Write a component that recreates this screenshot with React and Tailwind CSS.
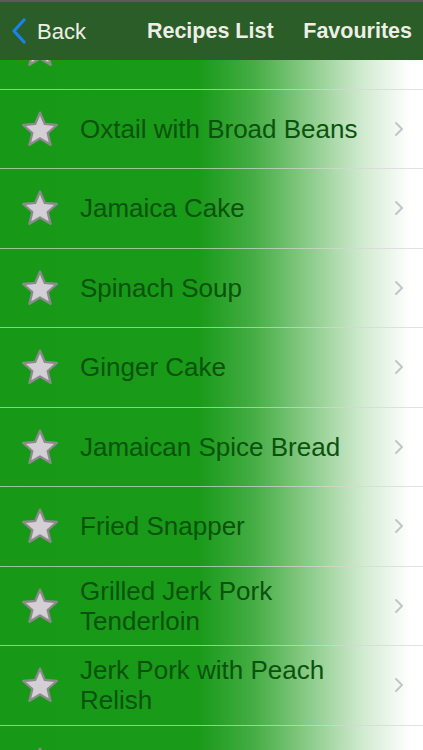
import React from 'react';

const recipes = [
  '',
  'Oxtail with Broad Beans',
  'Jamaica Cake',
  'Spinach Soup',
  'Ginger Cake',
  'Jamaican Spice Bread',
  'Fried Snapper',
  'Grilled Jerk Pork Tenderloin',
  'Jerk Pork with Peach Relish',
  '',
];

const Star = () => (
  <svg width="40" height="38" viewBox="0 0 38 36" className="shrink-0">
    <path
      d="M19 2.5 L23.6 13.2 L35 14.2 L26.3 21.8 L29 33 L19 27 L9 33 L11.7 21.8 L3 14.2 L14.4 13.2 Z"
      fill="#d3cfd4"
      stroke="#8c8a8c"
      strokeWidth="2.2"
      strokeLinejoin="round"
    />
  </svg>
);

const Chevron = () => (
  <svg width="10" height="16" viewBox="0 0 10 16" className="shrink-0">
    <path d="M2 2 L8 8 L2 14" fill="none" stroke="#c4c4c8" strokeWidth="2" strokeLinecap="round" strokeLinejoin="round" />
  </svg>
);

const Row = ({ title }) => (
  <div className="h-[79.5px] flex items-center pl-[20px] pr-[19px] border-b border-[#d6d6d6]/70">
    <Star />
    <span className="flex-1 pl-[20px] pr-[14px] text-[26px] leading-[30px] text-[#0a530c]">{title}</span>
    <Chevron />
  </div>
);

export default function App() {
  return (
    <div
      className="w-[423px] h-[750px] overflow-hidden flex flex-col bg-[linear-gradient(to_right,#179917_0%,#199a19_47%,#45ad44_60%,#86c984_72%,#d2ebd1_86%,#ffffff_97%)]"
      style={{ fontFamily: '"Liberation Sans", Arial, sans-serif' }}
    >
      <div className="h-[60px] shrink-0 bg-[#2a5d27] border-t-2 border-[#5b5b5b] flex items-center pl-[11px] pr-[11px] text-[#eeeee6] relative z-10">
        <div className="flex items-center gap-[10px]">
          <svg width="16" height="26" viewBox="0 0 16 26">
            <path d="M13 2 L3 13 L13 24" fill="none" stroke="#1a82ea" strokeWidth="3.2" strokeLinecap="round" strokeLinejoin="round" />
          </svg>
          <span className="text-[22px]">Back</span>
        </div>
        <span className="ml-[61px] font-bold text-[21.5px]">Recipes List</span>
        <span className="ml-auto font-bold text-[21.5px]">Favourites</span>
      </div>
      <div className="flex-1 overflow-hidden">
        <div className="-mt-[50px]">
          {recipes.map((r, i) => (
            <Row key={i} title={r} />
          ))}
        </div>
      </div>
    </div>
  );
}
